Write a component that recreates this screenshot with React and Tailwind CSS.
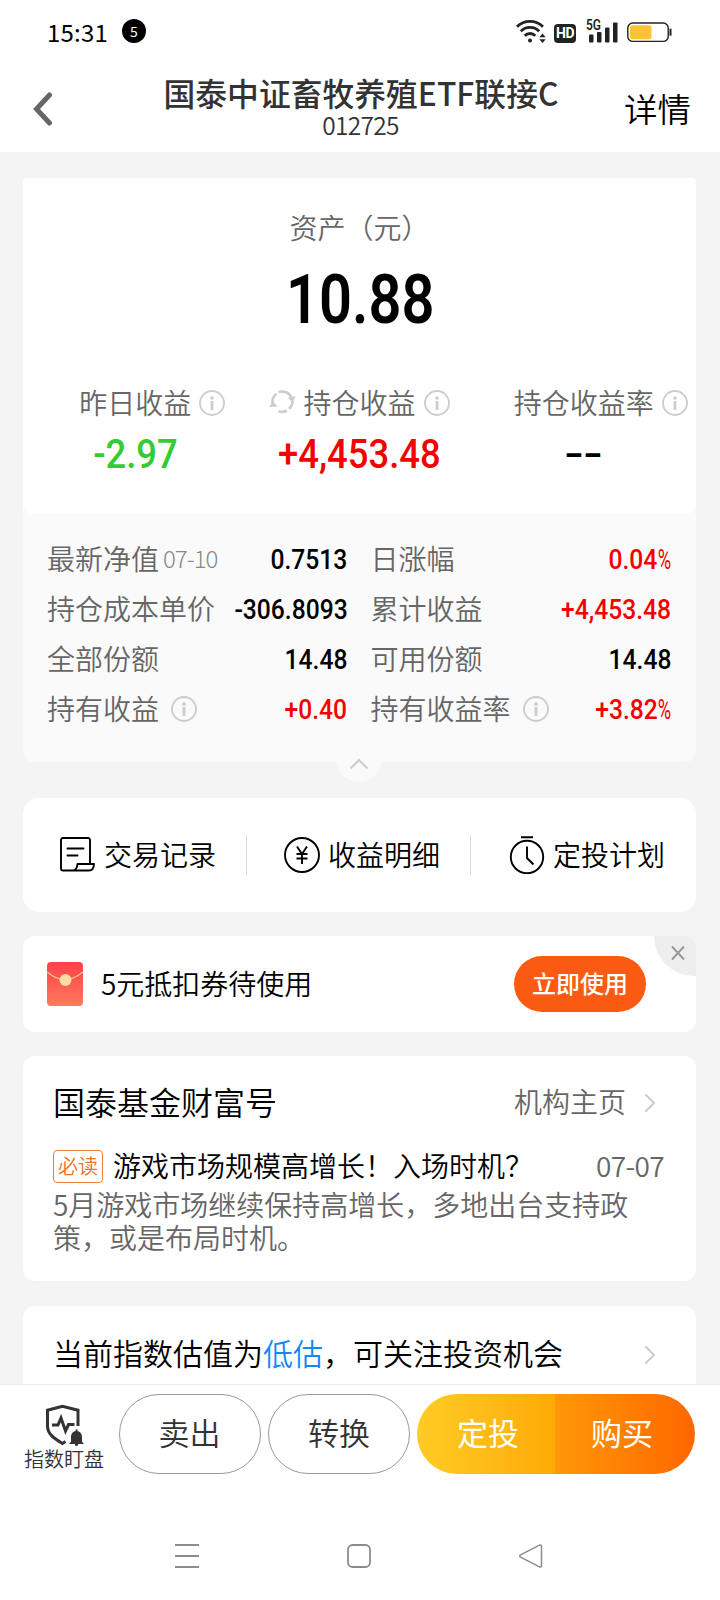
import React from 'react';

const summary = [
  { label: '昨日收益', value: '-2.97', color: 'text-[#3c3]' },
  { label: '持仓收益', value: '+4,453.48', color: 'text-[#f50000]', refresh: true },
  { label: '持仓收益率', value: '--', color: 'text-black', empty: true }
];

const details = [
  { label: '最新净值', date: '07-10', value: '0.7513' },
  { label: '日涨幅', value: '0.04', percent: true, up: true },
  { label: '持仓成本单价', value: '-306.8093' },
  { label: '累计收益', value: '+4,453.48', up: true },
  { label: '全部份额', value: '14.48' },
  { label: '可用份额', value: '14.48' },
  { label: '持有收益', value: '+0.40', up: true, info: true },
  { label: '持有收益率', value: '+3.82', percent: true, up: true, info: true }
];

const InfoIcon = () => (
  <svg className="w-[26px] h-[26px] shrink-0" viewBox="0 0 26 26" fill="none">
    <circle cx="13" cy="13" r="12" stroke="#ccc" strokeWidth="1.8" />
    <circle cx="13" cy="8" r="1.8" fill="#ccc" />
    <path d="M13 11v9" stroke="#ccc" strokeWidth="2.8" />
  </svg>
);

const RefreshIcon = () => (
  <svg className="w-[27px] h-[26px] shrink-0" viewBox="0 0 27 26" fill="none">
    <path d="M9.500 3.300A10.300 10.300 0 0 1 22.800 9M18 21.500A10.300 10.300 0 0 1 9.500 22.300M4 16A10.300 10.300 0 0 1 7.500 4.800M23.500 12A10.300 10.300 0 0 1 20 19.800" stroke="#ccc" strokeWidth="2.600" />
    <path d="M18.500 8.500l8.500-1-3.300 5.500zM8.500 17.500l-8.500.500 4-5.500z" fill="#ccc" />
  </svg>
);

const RecordIcon = () => (
  <svg className="w-9 h-9" viewBox="0 0 36 36" fill="none" stroke="#000" strokeWidth="1.9" strokeLinejoin="round" strokeLinecap="round">
    <path d="M30 27V3a2 2 0 0 0-2-2H3a2 2 0 0 0-2 2v28.500a2 2 0 0 0 2 2h26c3 0 4.800-2 5-6.500H17.500c-.3 3.500-2 6.500-5 6.500" />
    <path d="M7.500 11.500h16M7.500 18.500h10" />
  </svg>
);

const YenIcon = () => (
  <svg className="w-9 h-9" viewBox="0 0 36 36" fill="none" stroke="#000" strokeWidth="1.900">
    <circle cx="18" cy="18" r="17" />
    <path d="M13 9.500l5 7.500 5-7.500M12.500 17h11M12.500 21.500h11M18 17v10" />
  </svg>
);

const ClockIcon = () => (
  <svg className="w-9 h-[38px]" viewBox="0 0 36 38" fill="none" stroke="#000" strokeWidth="1.900">
    <circle cx="18" cy="21" r="16.200" />
    <path d="M12 1.200h12M18 10.500v11.500l6.500 6.500" />
  </svg>
);

const ChevronRight = () => (
  <svg className="w-3 h-5" viewBox="0 0 12 20" fill="none">
    <path d="M1.500 1.500L10 10l-8.500 8.500" stroke="#ccc" strokeWidth="2" />
  </svg>
);

const StatusBar = () => (
  <div className="h-[62px] flex items-center pl-[47px] pr-12">
    <span className="pt-px text-[24px] font-normal tracking-[0.2px] leading-none">15:31</span>
    <span className="ml-[14px] w-6 h-6 rounded-full bg-black text-white text-[14px] leading-6 text-center">5</span>
    <div className="ml-auto flex items-center">
      <svg className="mr-px w-[30px] h-6" viewBox="0 0 30 24" fill="none" stroke="#222" strokeWidth="2.800">
        <path d="M1 7.800a18.500 18.500 0 0 1 26 0M4.800 12.200a13 13 0 0 1 18.400 0M8.700 16.700a7.500 7.500 0 0 1 10.600 0" />
        <circle cx="14" cy="21.500" r="2" fill="#222" stroke="none" />
        <path d="M23.300 18.300l3.200-3.800 3.200 3.800zM23.300 20.200l3.200 3.800 3.200-3.800z" fill="#222" stroke="none" />
      </svg>
      <span className="ml-[7px] mt-1 w-[22px] h-[19px] rounded-[4px] bg-[#222] text-white font-['Roboto',sans-serif] text-[14px] font-bold leading-[19px] text-center tracking-[-0.5px]">HD</span>
      <svg className="ml-[10px] w-8 h-8" viewBox="0 -4 32 32" fill="#222">
        <text x="0" y="11.300" fontFamily="Roboto, sans-serif" fontSize="14" fontWeight="600" textLength="15" lengthAdjust="spacingAndGlyphs">5G</text>
        <rect x="3" y="15.500" width="4.500" height="8" rx="1" />
        <rect x="11" y="13" width="4.500" height="10.500" rx="1" />
        <rect x="19" y="8.500" width="4.500" height="15" rx="1" />
        <rect x="27" y="3.500" width="4.500" height="20" rx="1" />
      </svg>
      <svg className="ml-[9px] w-[45px] h-6" viewBox="0 0 45 24" fill="none">
        <rect x=".800" y="4" width="40.400" height="18.400" rx="5" stroke="#222" strokeWidth="1.400" />
        <rect x="3" y="6.200" width="21.500" height="14" rx="2.500" fill="#ffc233" />
        <path d="M43.500 9.700v7" stroke="#222" strokeWidth="2" />
      </svg>
    </div>
  </div>
);

const Header = () => (
  <div className="h-[90px] flex">
    <div className="w-[120px] pl-[33px] pt-[30px]">
      <svg className="w-[20px] h-[34px]" viewBox="0 0 20 34" fill="none">
        <path d="M16.500 3L3.500 17l13 14" stroke="#666" strokeWidth="5" strokeLinecap="round" />
      </svg>
    </div>
    <div className="flex-1 flex flex-col items-center text-[#333] whitespace-nowrap">
      <div className="mt-3 pl-0.5 text-[31.8px] leading-9 font-medium">国泰中证畜牧养殖ETF联接C</div>
      <div className="mt-px pl-px text-[24.5px] leading-7 font-[350] tracking-[-0.7px]">012725</div>
    </div>
    <div className="w-[120px] pl-6 pt-[26px] text-[33.5px] leading-10 font-[350] text-black">详情</div>
  </div>
);

const AssetCard = () => (
  <div className="relative mt-[26px] rounded-t-[4px] rounded-b-[11px] bg-[#fafafa]">
    <div className="h-[336px] rounded-t-[4px] rounded-b-[11px] bg-white flex flex-col items-center">
      <div className="mt-[29px] text-[28px] leading-10 font-[350] text-[#666]">资产（元）</div>
      <div className="mt-[18px] h-[70px] pl-0.5 text-[68px] leading-[70px] font-['Roboto',sans-serif] font-semibold text-black scale-x-[0.85]">10.88</div>
      <div className="w-full mt-[47px] grid grid-cols-3">
        {summary.map((item) => (
          <div key={item.label} className="flex flex-col items-center">
            <div className="flex items-center justify-center text-[28px] leading-10 font-[350] text-[#666] whitespace-nowrap">
              <span className="w-[26px] mr-2 flex">{item.refresh && <RefreshIcon />}</span>
              <span>{item.label}</span>
              <span className="ml-2 mt-px flex"><InfoIcon /></span>
            </div>
            <div
              className={`mt-[10px] text-[40px] leading-[46px] font-['Roboto',sans-serif] font-medium ${item.color} ${
                item.empty ? 'scale-x-[1.4]' : 'scale-x-[0.91]'
              }`}
            >
              {item.value}
            </div>
          </div>
        ))}
      </div>
    </div>

    <div className="h-[248px] pt-[18px] pl-[25px] pr-[25px] grid grid-cols-2 gap-x-6 content-start">
      {details.map((item) => (
        <div key={item.label} className="h-[50px] flex items-center justify-between whitespace-nowrap">
          <div className="flex items-center pt-px text-[28px] leading-10 font-[350] text-[#666]">
            <span className="-ml-px">{item.label}</span>
            {item.date && <span className="ml-1 text-[24px] font-light tracking-[-1px] text-[#888]">{item.date}</span>}
            {item.info && <span className="ml-3 mt-[3px] flex"><InfoIcon /></span>}
          </div>
          <span className={`mt-[5px] origin-right scale-x-[0.88] text-[28px] leading-10 font-['Roboto',sans-serif] font-medium ${item.up ? 'text-[#f50000]' : 'text-black'}`}>
            {item.value}
            {item.percent && <span className="inline-block w-[15px] origin-left scale-x-[0.74] font-normal">%</span>}
          </span>
        </div>
      ))}
    </div>

    {/* Collapse handle */}
    <div className="absolute left-[313px] -bottom-5 w-[46px] h-[46px] pt-[9px] rounded-full bg-[#fafafa] flex items-center justify-center">
      <svg className="w-5 h-3" viewBox="0 0 20 12" fill="none">
        <path d="M1.500 10.500L10 2l8.500 8.500" stroke="#ccc" strokeWidth="2" />
      </svg>
    </div>
  </div>
);

const ActionCard = () => (
  <div className="mt-9 h-[114px] rounded-[16px] bg-white flex items-center text-[28px] leading-[38px] font-[350] text-black whitespace-nowrap">
    <div className="w-[223px] pl-[37px] flex items-center gap-2">
      <RecordIcon />
      <span className="pb-0.5">交易记录</span>
    </div>
    <div className="w-px h-10 bg-[#ddd]" />
    <div className="w-[223px] pl-[37px] flex items-center gap-2">
      <YenIcon />
      <span className="pb-0.5">收益明细</span>
    </div>
    <div className="w-px h-10 bg-[#ddd]" />
    <div className="flex-1 pl-[38px] flex items-center gap-2">
      <ClockIcon />
      <span className="pb-0.5">定投计划</span>
    </div>
  </div>
);

const CouponCard = () => (
  <div className="relative mt-6 h-24 rounded-[12px] bg-white flex items-center pl-6 pr-[50px] overflow-hidden">
    <svg className="w-9 h-11" viewBox="0 0 36 44" fill="none">
      <defs>
        <linearGradient id="envelope" x1="0" y1="0" x2="0" y2="1">
          <stop offset="0" stopColor="#ff4149" />
          <stop offset="1" stopColor="#ff7a5c" />
        </linearGradient>
      </defs>
      <rect width="36" height="44" rx="4" fill="url(#envelope)" />
      <path d="M0 10Q18 25 36 10" stroke="#ffc78f" strokeWidth="1.200" />
      <circle cx="18.500" cy="18" r="6" fill="#ffdca0" />
    </svg>
    <span className="ml-[18px] pb-0.5 text-[28px] leading-[38px] font-[350] text-black">5元抵扣券待使用</span>
    <button className="ml-auto w-[132px] h-14 pb-0.5 rounded-full bg-[#fb5a13] text-white text-[24px] leading-none font-medium">立即使用</button>
    <div className="absolute right-0 top-0 w-[42px] h-10 rounded-bl-[40px] bg-[#eee] flex items-center justify-center pl-[6px] pb-[6px]">
      <svg className="w-[14px] h-4" viewBox="0 0 14 16" fill="none">
        <path d="M1 1.500l12 13M13 1.500L1 14.500" stroke="#999" strokeWidth="2" />
      </svg>
    </div>
  </div>
);

const WealthCard = () => (
  <div className="mt-6 h-[225px] rounded-[12px] bg-white pl-[30px] pr-8 pt-[25px] whitespace-nowrap">
    <div className="flex items-center justify-between">
      <span className="text-[32px] leading-10 text-black font-[350]">国泰基金财富号</span>
      <div className="pr-2 flex items-center gap-[18px] text-[28px] leading-10 font-[350] text-[#666]">
        机构主页
        <span className="mt-1"><ChevronRight /></span>
      </div>
    </div>
    <div className="mt-6 h-10 flex items-center">
      <span className="mt-0.5 w-[50px] h-[33px] rounded-[4px] border border-[#f08040] text-[#f07020] text-[20px] leading-[30px] font-[350] text-center">必读</span>
      <span className="ml-[10px] text-[28px] leading-10 font-[350] text-black">游戏市场规模高增长！入场时机？</span>
      <span className="ml-auto text-[28px] leading-10 font-[350] tracking-[-0.6px] text-[#666]">07-07</span>
    </div>
    <p className="w-[600px] mt-[3px] text-[28px] leading-[33px] font-[350] text-[#666] whitespace-normal">
      5月游戏市场继续保持高增长，多地出台支持政策，或是布局时机。
    </p>
  </div>
);

const ValuationCard = () => (
  <div className="mt-[25px] h-[78px] rounded-t-[12px] bg-white pl-[30px] pr-10 pt-[26px] flex items-start justify-between">
    <span className="text-[30px] leading-10 font-[350] text-black">
      当前指数估值为<span className="text-[#1489f5]">低估</span>，可关注投资机会
    </span>
    <span className="h-[46px] flex items-center"><ChevronRight /></span>
  </div>
);

const BottomBar = () => (
  <div className="h-[110px] border-t border-[#eaeaea] bg-white flex items-start pt-[9px] pr-[25px] text-[31px] font-[350]">
    <div className="w-[119px] pl-[9px] pt-[10px] flex flex-col items-center text-[#333]">
      <svg className="w-10 h-[42px]" viewBox="0 0 40 42" fill="none" stroke="#333" strokeWidth="3">
        <path d="M21.500 37.500L18.500 39.500C10 34.500 3.500 30 3.500 22V6.200L18.500 2.200 34 6.200V22" />
        <path d="M8 21h6l3-7 4.500 13 3-6.500h6" />
        <path d="M32.500 27c-4 0-5.500 3-5.500 6.500v4l-1.800 2.500h14.600l-1.800-2.500v-4c0-3.500-1.500-6.500-5.500-6.500z" fill="#333" stroke="none" />
        <circle cx="32.500" cy="40.400" r="1.600" fill="#333" stroke="none" />
        <path d="M32.500 25.500v3" strokeWidth="2" />
      </svg>
      <span className="mt-px text-[20px] leading-6">指数盯盘</span>
    </div>
    <button className="w-[142px] h-20 pb-[3px] pr-px rounded-full border border-[#999] text-[#333]">卖出</button>
    <button className="ml-[7px] w-[142px] h-20 pb-[3px] rounded-full border border-[#999] text-[#333]">转换</button>
    <div className="ml-[7px] flex-1 h-20 flex rounded-full overflow-hidden text-white">
      <button className="flex-1 bg-linear-to-r from-[#ffcc24] to-[#fdaa04] pl-1 pb-[3px] font-normal">定投</button>
      <button className="flex-1 bg-linear-to-r from-[#ff9706] to-[#ff6600] pr-1.5 pb-[3px] font-normal">购买</button>
    </div>
  </div>
);

const SystemNav = () => (
  <div className="flex-1 bg-white flex items-center justify-center gap-[148px] pt-[18px] pr-0.5">
    <svg className="w-6 h-6" viewBox="0 0 24 24" fill="none" stroke="#8c8c8c" strokeWidth="1.800">
      <path d="M0 1h24M0 12h24M0 23h24" />
    </svg>
    <svg className="w-6 h-6" viewBox="0 0 24 24" fill="none" stroke="#8c8c8c" strokeWidth="1.800">
      <rect x="1" y="1" width="22" height="22" rx="4.500" />
    </svg>
    <svg className="w-6 h-6" viewBox="0 0 24 24" fill="none" stroke="#8c8c8c" strokeWidth="1.500" strokeLinejoin="round">
      <path d="M1.500 10.800L20.500 1.200q2-.800 2 1.200v19.200q0 2-2 1.200L1.500 13.200q-1.500-1.200 0-2.400z" />
    </svg>
  </div>
);

const App = () => {
  return (
    <div className="w-[720px] h-[1600px] overflow-hidden flex flex-col bg-[#f4f4f4] font-['Noto_Sans_CJK_SC',sans-serif] text-black">
      <div className="bg-white">
        <StatusBar />
        <Header />
      </div>
      <div className="pl-[23px] pr-6">
        <AssetCard />
        <ActionCard />
        <CouponCard />
        <WealthCard />
        <ValuationCard />
      </div>
      <BottomBar />
      <SystemNav />
    </div>
  );
};

export default App;
